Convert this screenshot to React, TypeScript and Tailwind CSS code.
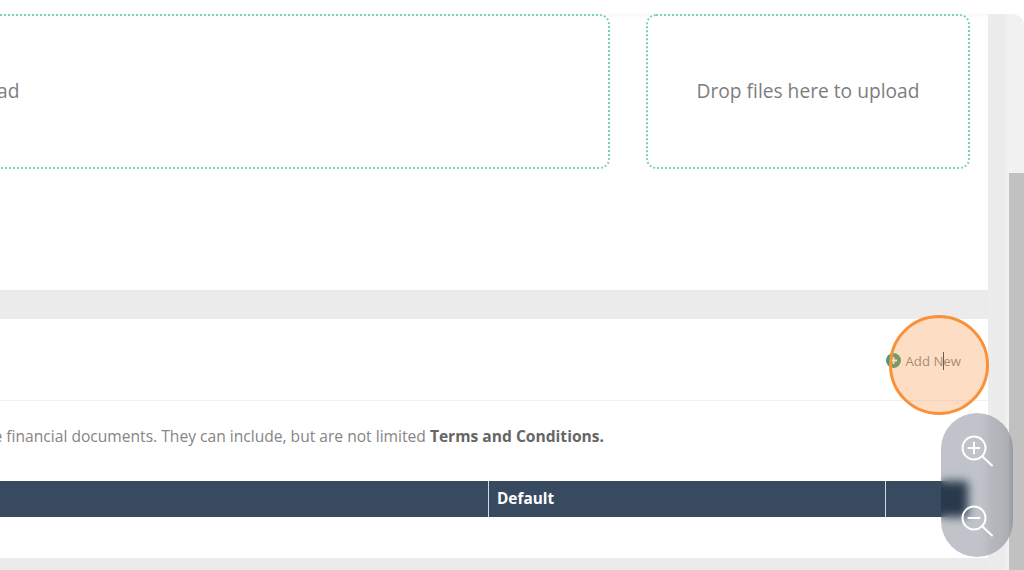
import React from "react";

function DropZone({ className }: { className: string }) {
  return (
    <div className={`h-[155px] shrink-0 rounded-[10px] border-2 border-dotted border-[#7fcdbf] flex items-center justify-center text-[19.2px] text-[#7d7d7d] ${className}`}>
      Drop files here to upload
    </div>
  );
}

function ZoomGlyph({ minus }: { minus?: boolean }) {
  return (
    <svg width="34" height="34" viewBox="0 0 34 34" fill="none" stroke="#ffffff" strokeWidth="2" strokeLinecap="round">
      <circle cx="14" cy="14" r="11.5" />
      <path d="M23 23l9 8.5" />
      <path d="M8.5 14h11" />
      {!minus && <path d="M14 8.5v11" />}
    </svg>
  );
}

export default function App() {
  return (
    <div className="relative w-[1024px] h-[570px] overflow-hidden bg-white flex flex-col blur-[0.6px] font-['Open_Sans',sans-serif]">
      <div className="h-[14px] shrink-0 bg-white" />
      <div className="flex-1 flex min-h-0 rounded-tr-[12px] overflow-hidden">
        <main className="w-[988px] shrink-0 flex flex-col bg-[#ebebeb]">
          <section className="h-[276px] shrink-0 bg-white flex gap-[36px] pr-[18px] justify-end shadow-[inset_0_6px_6px_-6px_rgba(0,0,0,0.06)]">
            <DropZone className="w-[1404px]" />
            <DropZone className="w-[324px]" />
          </section>
          <div className="h-[29px] shrink-0" />
          <section className="h-[239px] shrink-0 bg-white flex flex-col">
            <div className="h-[82px] shrink-0 border-b border-[#f2f2f2] flex items-center justify-end pr-[27px] pt-[2px] gap-[5px] text-[13.2px] text-[#8a8a8a]">
              <svg width="15" height="15" viewBox="0 0 15 15">
                <circle cx="7.5" cy="7.5" r="7.5" fill="#3f9f78" />
                <path d="M4 7.5h7M7.5 4v7" stroke="#ffffff" strokeWidth="1.8" />
              </svg>
              <span className="pt-[2px]">Add New</span>
            </div>
            <div className="h-[80px] shrink-0 flex items-center justify-end pr-[384px] pb-[9px] whitespace-nowrap text-[15.6px] text-[#858585]">
              <p className="shrink-0">
                Terms are shown on the financial documents. They can include, but are not limited <strong className="font-bold text-[#666666]">Terms and Conditions.</strong>
              </p>
            </div>
            <div className="mr-[20px] h-[36px] shrink-0 bg-[#374a60] flex text-[15.36px] font-bold text-white">
              <div className="flex-1 border-r border-[#d5dae0]" />
              <div className="w-[397px] pl-[8px] border-r border-[#d5dae0] flex items-center">Default</div>
              <div className="w-[82px]" />
            </div>
          </section>
        </main>
        <aside className="flex-1 flex bg-[#ececec]">
          <div className="w-[18px] shrink-0" />
          <div className="flex-1 flex flex-col items-end bg-[#f1f1f1]">
            <div className="h-[159px] shrink-0" />
            <div className="flex-1 w-[15px] bg-[#c1c1c1]" />
          </div>
        </aside>
      </div>

      <div className="absolute left-[889px] top-[315px] w-[100px] h-[100px] rounded-full border-[3px] border-[#f8913a] bg-[#f8913a]/30" />
      <div className="absolute left-[943px] top-[352px] w-px h-[18px] bg-[#6b5a50]" />

      <div className="absolute left-[941px] top-[413px] w-[72px] h-[144px] rounded-full backdrop-blur-[5px]" />
      <div className="absolute left-[941px] top-[413px] w-[72px] h-[144px] rounded-full bg-[#c0c4ca] mix-blend-multiply" />
      <div className="absolute left-[941px] top-[413px] w-[72px] h-[144px] flex flex-col items-center justify-between pt-[21px] pb-[19px]">
        <ZoomGlyph />
        <ZoomGlyph minus />
      </div>
    </div>
  );
}
